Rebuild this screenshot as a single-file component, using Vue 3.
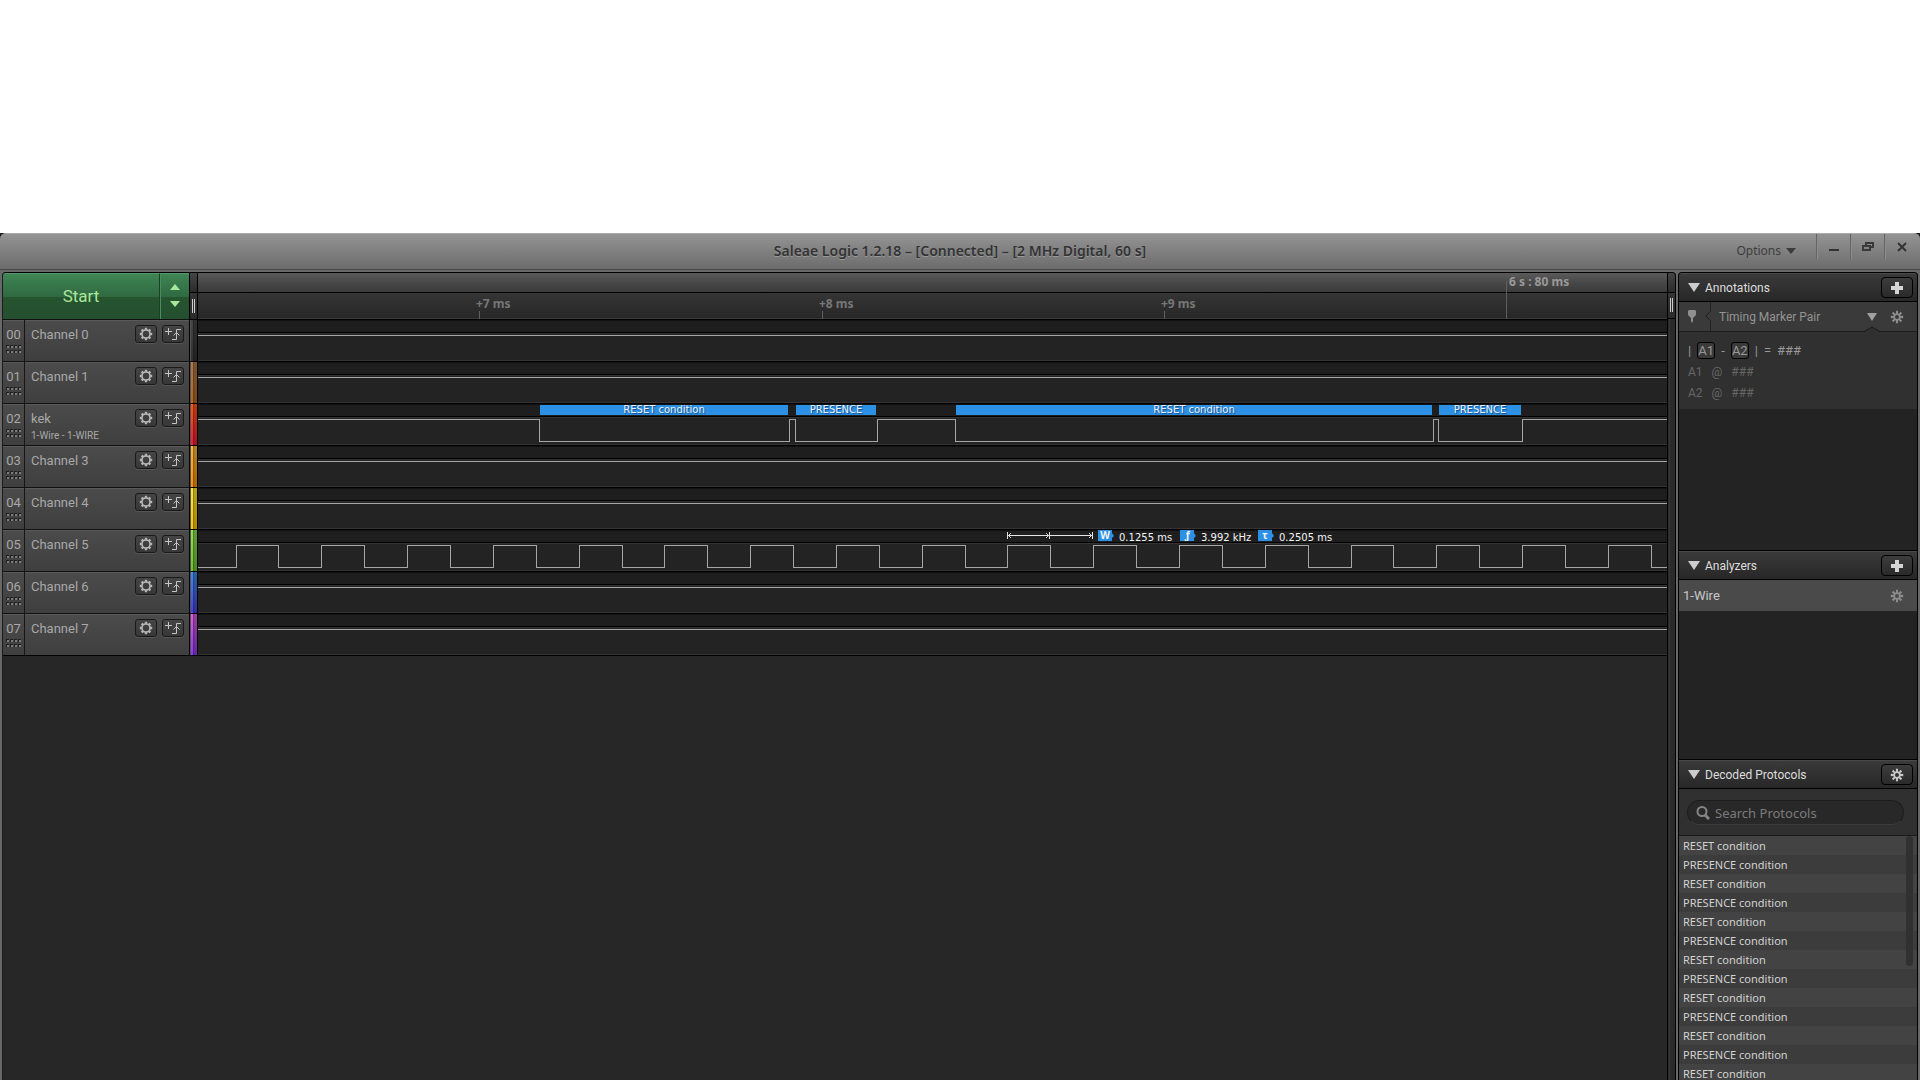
<template>
  <div class="screen">
    <div class="desktop">
      <div class="window">
        <header class="titlebar">
          <h1 class="title">Saleae Logic 1.2.18 – [Connected] – [2 MHz Digital, 60 s]</h1>
          <div class="title-actions">
            <button class="options" type="button">
              Options
              <svg width="10" height="6" viewBox="0 0 10 6"><path d="M0 0h10L5 6z" fill="#3c3c3c" /></svg>
            </button>
            <button class="win-btn" type="button" aria-label="Minimize">
              <svg width="12" height="12" viewBox="0 0 12 12"><path d="M1 8h10v2H1z" fill="#333" /></svg>
            </button>
            <button class="win-btn" type="button" aria-label="Restore">
              <svg width="14" height="12" viewBox="0 0 14 12">
                <path d="M5 5V2h7v4h-2M2 5h7v4H2z" fill="none" stroke="#3a3a3a" stroke-width="2" />
              </svg>
            </button>
            <button class="win-btn" type="button" aria-label="Close">
              <svg width="12" height="12" viewBox="0 0 12 12">
                <path d="M2 2l8 8M10 2l-8 8" stroke="#333" stroke-width="2" />
              </svg>
            </button>
          </div>
        </header>

        <div class="content">
          <main class="capture">
            <div class="row ruler-row">
              <div class="start-group">
                <button class="start" type="button">Start</button>
                <button class="start-arrows" type="button" aria-label="Capture settings">
                  <svg width="10" height="23" viewBox="0 0 10 23">
                    <path d="M5 0l5 6H0zM0 17h10l-5 6z" fill="#a9e69a" />
                  </svg>
                </button>
              </div>
              <div class="grip"><span></span></div>
              <div class="ruler">
                <div class="ruler-top"></div>
                <div class="ruler-bottom"></div>
                <div v-for="tick in ticks" :key="tick.label" class="tick" :class="{ major: tick.major }" :style="{ left: tick.x + 'px' }">
                  <span>{{ tick.label }}</span>
                </div>
              </div>
            </div>

            <div v-for="channel in channels" :key="channel.id" class="row channel">
              <div class="channel-number">
                <span>{{ channel.id }}</span>
                <svg width="15" height="8" viewBox="0 0 15 8">
                  <g v-for="y in [0, 5]" :key="y">
                    <g v-for="x in [0, 4, 8, 12]" :key="x">
                      <rect :x="x" :y="y" width="3" height="3" fill="#1f1f1f" />
                      <rect :x="x + 1" :y="y + 1" width="2" height="2" fill="#7d7d7d" />
                    </g>
                  </g>
                </svg>
              </div>
              <div class="channel-info">
                <div class="channel-name">
                  {{ channel.name }}
                  <small v-if="channel.note">{{ channel.note }}</small>
                </div>
                <button class="small-btn" type="button" :aria-label="'Settings for ' + channel.name">
                  <svg width="14" height="14" viewBox="0 0 14 14"><path :d="gearPath" fill="#b5b5b5" fill-rule="evenodd" /></svg>
                </button>
                <button class="small-btn" type="button" :aria-label="'Trigger for ' + channel.name">
                  <svg width="16" height="14" viewBox="0 0 16 14">
                    <path d="M0 4.500h7M3.500 1v7M7 12.500h4.500V2.500H16M8.500 8.500L11.500 5.500L14.500 8.500" fill="none" stroke="#c4c4c4" />
                  </svg>
                </button>
              </div>
              <div class="channel-color" :class="'color-' + channel.color"></div>
              <div class="lane">
                <div class="lane-top"></div>
                <svg class="wave" width="100%" height="42">
                  <path :d="wavePath(channel)" fill="none" stroke="#a6a6a6" shape-rendering="crispEdges" />
                </svg>
                <div
                  v-for="frame in channel.frames"
                  :key="frame.x"
                  class="frame"
                  :style="{ left: frame.x + 'px', width: frame.width + 'px' }"
                >
                  {{ frame.label }}
                </div>
                <template v-if="channel.measurements">
                  <svg class="span-arrows" width="87" height="8" viewBox="0 0 87 8">
                    <path d="M.5 0v7M42.500 0v7M85.500 0v7M1 3.500h84" stroke="#e4e4e4" fill="none" />
                    <path d="M4 1L1.500 3.500L4 6M39 1l2.500 2.500L39 6M82 1l2.500 2.500L82 6" stroke="#cfcfcf" fill="none" />
                  </svg>
                  <div v-for="m in channel.measurements" :key="m.symbol" class="measure" :style="{ left: m.x + 'px' }">
                    <b>{{ m.symbol }}</b>
                    <span>{{ m.value }}</span>
                  </div>
                </template>
              </div>
            </div>
            <div class="capture-end"></div>
          </main>

          <div class="edge">
            <div class="grip"><span></span></div>
          </div>

          <aside class="sidebar">
            <section class="panel panel-annotations">
              <header class="panel-header">
                <button class="collapse" type="button"><i></i>Annotations</button>
                <button class="panel-btn" type="button" aria-label="Add annotation">
                  <svg width="12" height="12" viewBox="0 0 12 12"><path :d="plusPath" fill="#d4d4d4" /></svg>
                </button>
              </header>
              <div class="marker-bar">
                <svg class="pin" width="8" height="13" viewBox="0 0 8 13">
                  <path d="M1 0h6l1 1v4L5 8v3L4 13L3 11V8L0 5V1z" fill="#8f8f8f" />
                </svg>
                <svg class="notch" width="6" height="29" viewBox="0 0 6 29">
                  <path d="M5.500 0V9L1 14L5.500 19V29" fill="none" stroke="#222" />
                </svg>
                <select v-model="marker" class="marker-select" aria-label="Annotation">
                  <option>Timing Marker Pair</option>
                </select>
                <svg class="select-arrow" width="10" height="8" viewBox="0 0 10 8"><path d="M0 0h10L5 8z" fill="#a0a0a0" /></svg>
                <button class="plain-btn" type="button" aria-label="Annotation settings">
                  <svg width="14" height="14" viewBox="0 0 14 14"><path :d="cogPath" fill="#8d8d8d" fill-rule="evenodd" /></svg>
                </button>
                <svg class="peak" width="16" height="6" viewBox="0 0 16 6">
                  <path d="M0 6L8 1L16 6z" fill="#303030" />
                  <path d="M0 5.500L8 1L16 5.500" fill="none" stroke="#1e1e1e" />
                </svg>
              </div>
              <div class="marker-body">
                <p class="formula">
                  <span>|</span><button type="button">A1</button><span>-</span><button type="button">A2</button><span>|</span><span>=</span><span>###</span>
                </p>
                <p class="marker-line"><span>A1</span><span>@</span><span>###</span></p>
                <p class="marker-line"><span>A2</span><span>@</span><span>###</span></p>
              </div>
            </section>

            <section class="panel panel-analyzers">
              <header class="panel-header">
                <button class="collapse" type="button"><i></i>Analyzers</button>
                <button class="panel-btn" type="button" aria-label="Add analyzer">
                  <svg width="12" height="12" viewBox="0 0 12 12"><path :d="plusPath" fill="#d4d4d4" /></svg>
                </button>
              </header>
              <div class="analyzer">
                <span>1-Wire</span>
                <button class="plain-btn" type="button" aria-label="1-Wire settings">
                  <svg width="14" height="14" viewBox="0 0 14 14"><path :d="cogPath" fill="#8d8d8d" fill-rule="evenodd" /></svg>
                </button>
              </div>
            </section>

            <section class="panel panel-protocols">
              <header class="panel-header">
                <button class="collapse" type="button"><i></i>Decoded Protocols</button>
                <button class="panel-btn" type="button" aria-label="Protocol settings">
                  <svg width="14" height="14" viewBox="0 0 14 14"><path :d="cogPath" fill="#c8c8c8" fill-rule="evenodd" /></svg>
                </button>
              </header>
              <div class="search">
                <label class="search-box" for="protocol-search">
                  <svg width="14" height="14" viewBox="0 0 14 14">
                    <circle cx="6" cy="5.500" r="4.500" fill="none" stroke="#858585" stroke-width="2" />
                    <path d="M9 9l4 4" stroke="#858585" stroke-width="3" />
                  </svg>
                  <input id="protocol-search" v-model="query" type="text" placeholder="Search Protocols" aria-label="Search Protocols" />
                </label>
              </div>
              <ul class="results">
                <li v-for="(item, index) in results" :key="index">{{ item }}</li>
              </ul>
            </section>
          </aside>
        </div>
      </div>
    </div>
  </div>
</template>

<script setup>
import { ref, computed } from "vue";

const query = ref("");
const marker = ref("Timing Marker Pair");

const ticks = [
  { x: 281, label: "+7 ms" },
  { x: 624, label: "+8 ms" },
  { x: 966, label: "+9 ms" },
  { x: 1308, label: "6 s : 80 ms", major: true },
];

// square wave, one edge every half period
const clockEdges = Array.from({ length: 34 }, (_, k) => Math.floor(38.05 + k * 42.885));

const channels = [
  { id: "00", name: "Channel 0", color: "black" },
  { id: "01", name: "Channel 1", color: "brown" },
  {
    id: "02",
    name: "kek",
    note: "1-Wire - 1-WIRE",
    color: "red",
    edges: [341, 591, 597, 679, 757, 1235, 1240, 1324],
    frames: [
      { x: 342, width: 248, label: "RESET condition" },
      { x: 598, width: 80, label: "PRESENCE" },
      { x: 758, width: 476, label: "RESET condition" },
      { x: 1241, width: 82, label: "PRESENCE" },
    ],
  },
  { id: "03", name: "Channel 3", color: "orange" },
  { id: "04", name: "Channel 4", color: "yellow" },
  {
    id: "05",
    name: "Channel 5",
    color: "green",
    startLow: true,
    edges: clockEdges,
    measurements: [
      { x: 900, symbol: "W", value: "0.1255 ms" },
      { x: 982, symbol: "ƒ", value: "3.992 kHz" },
      { x: 1060, symbol: "τ", value: "0.2505 ms" },
    ],
  },
  { id: "06", name: "Channel 6", color: "blue" },
  { id: "07", name: "Channel 7", color: "purple" },
];

const HIGH = 16.5;
const LOW = 38.5;

const wavePath = (channel) => {
  let high = !channel.startLow;
  let d = `M0 ${high ? HIGH : LOW}`;
  for (const x of channel.edges || []) {
    high = !high;
    d += `H${x + 0.5}V${high ? HIGH : LOW}`;
  }
  return d + "H4000";
};

const makeGear = (outer, inner, hole) => {
  const points = [];
  for (let i = 0; i < 8; i++) {
    const a = (i * Math.PI) / 4;
    [[-0.25, inner], [-0.18, outer], [0.18, outer], [0.25, inner]].forEach(([da, r]) => {
      points.push(`${(7 + r * Math.sin(a + da)).toFixed(2)} ${(7 - r * Math.cos(a + da)).toFixed(2)}`);
    });
  }
  return `M${points.join("L")}ZM${7 - hole} 7a${hole} ${hole} 0 1 0 ${hole * 2} 0a${hole} ${hole} 0 1 0 ${-hole * 2} 0z`;
};

const gearPath = makeGear(6.3, 4.8, 3.2);
const cogPath = makeGear(6.3, 3.8, 2);
const plusPath = "M4 0h4v4h4v4H8v4H4V8H0V4h4z";

const protocols = Array.from({ length: 13 }, (_, i) => (i % 2 ? "PRESENCE condition" : "RESET condition"));
const results = computed(() => protocols.filter((p) => p.toLowerCase().includes(query.value.toLowerCase())));
</script>

<style>
body {
  background: #fff;
}
</style>

<style scoped>
* {
  box-sizing: border-box;
}

.screen {
  height: 100vh;
  display: flex;
  flex-direction: column;
  padding-top: 233px;
  overflow: hidden;
  font-family: Roboto, "Liberation Sans", sans-serif;
  font-size: 13px;
  color: #a8a8a8;
}

button,
input,
select {
  font: inherit;
  color: inherit;
  background: none;
  border: 0;
  padding: 0;
  margin: 0;
}

svg {
  display: block;
  flex: none;
}

.desktop {
  flex: 1;
  min-height: 0;
  display: flex;
  background: #1b1d26;
}

.window {
  flex: 1;
  min-width: 0;
  display: flex;
  flex-direction: column;
  background: #666;
  border-radius: 6px 6px 0 0;
  overflow: hidden;
}

.titlebar {
  position: relative;
  height: 37px;
  flex: none;
  display: flex;
  justify-content: center;
  background: linear-gradient(#949494, #6c6c6c);
  border-top: 1px solid #aaa;
  border-bottom: 1px solid #4a4a4a;
  font-family: "Noto Sans", sans-serif;
}

.title {
  margin: 0;
  font-size: 14px;
  line-height: 34px;
  font-weight: 600;
  color: #333;
  text-shadow: 0 1px 0 #9a9a9a;
}

.title-actions {
  position: absolute;
  top: 0;
  right: 2px;
  display: flex;
  height: 33px;
}

.options {
  display: flex;
  align-items: center;
  gap: 5px;
  padding-right: 20px;
  font-size: 12px;
  color: #3c3c3c;
}

.win-btn {
  width: 34px;
  height: 25px;
  display: flex;
  align-items: center;
  justify-content: center;
  border-left: 1px solid #666;
  box-shadow: inset 1px 0 #8d8d8d;
}

.content {
  flex: 1;
  min-height: 0;
  display: flex;
  padding: 2px 2px 0;
  background: #686868;
}

.capture {
  flex: 1;
  min-width: 0;
  background: #272727;
  border-top: 1px solid #000;
  border-left: 1px solid #1c1c1c;
  border-right: 1px solid #000;
  border-radius: 4px 0 0 0;
  overflow: hidden;
}

.row {
  display: flex;
}

.ruler-row {
  height: 46px;
}

.start-group {
  width: 187px;
  display: flex;
  border-right: 1px solid #000;
}

.start,
.start-arrows {
  background: linear-gradient(#408454, #2f6a41 50%, #26542f 51%, #244f31);
  border-top: 1px solid #55996a;
}

.start {
  flex: 1;
  padding-bottom: 2px;
  font-size: 17px;
  color: #a9e69a;
  border-right: 1px solid #1c3f26;
}

.start-arrows {
  width: 29px;
  display: flex;
  align-items: center;
  justify-content: center;
  padding: 0 1px 2px 0;
  border-left: 1px solid #4a8c5d;
}

.grip {
  width: 8px;
  height: 46px;
  flex: none;
  display: flex;
  justify-content: center;
  align-items: flex-end;
  padding-bottom: 6px;
  background: linear-gradient(#444, #2b2b2b 19px, #000 19px, #000 20px, #343434 20px, #2b2b2b);
  border-right: 1px solid #000;
}

.grip span {
  width: 3px;
  height: 14px;
  border-left: 1px solid #ccc;
  border-right: 1px solid #ccc;
}

.ruler {
  position: relative;
  flex: 1;
  display: flex;
  flex-direction: column;
}

.ruler-top {
  height: 20px;
  background: linear-gradient(#5a5a5a, #454545 60%, #3c3c3c);
  border-bottom: 1px solid #000;
}

.ruler-bottom {
  flex: 1;
  background: linear-gradient(#353535, #272727);
  border-bottom: 1px solid #3a3a3a;
}

.tick {
  position: absolute;
  bottom: 0;
  height: 8px;
  border-left: 1px solid #5f5f5f;
}

.tick span {
  position: absolute;
  left: -4px;
  bottom: 7px;
  font: bold 12px/16px "Noto Sans", sans-serif;
  white-space: nowrap;
  color: #777;
}

.tick.major {
  height: 38px;
}

.tick.major span {
  left: 2px;
  bottom: 29px;
  color: #999;
}

.channel {
  height: 42px;
}

.channel-number,
.channel-info {
  background: linear-gradient(#4b4b4b, #3f3f3f);
  border-top: 1px solid #111;
  box-shadow: inset 0 1px #5a5a5a;
}

.channel-number {
  width: 22px;
  display: flex;
  flex-direction: column;
  align-items: center;
  gap: 2px;
  padding-top: 7px;
  line-height: 16px;
  border-right: 1px solid #161616;
}

.channel-info {
  width: 165px;
  display: flex;
  gap: 5px;
  padding: 5px 5px 0 6px;
  border-right: 1px solid #000;
}

.channel-name {
  flex: 1;
  padding-top: 2px;
  line-height: 16px;
  white-space: nowrap;
}

.channel-name small {
  display: block;
  font-size: 10px;
  line-height: 18px;
}

.small-btn {
  width: 22px;
  height: 18px;
  display: flex;
  align-items: center;
  justify-content: center;
  background: linear-gradient(#454545, #373737);
  border: 1px solid #1a1a1a;
  border-radius: 3px;
  box-shadow: 0 1px #555;
}

.channel-color {
  width: 8px;
  border: solid #000;
  border-width: 1px 1px 0 0;
  background: linear-gradient(90deg, #555 0 1px, transparent 1px 3px, rgba(0, 0, 0, 0.45) 3px 4px, rgba(0, 0, 0, 0.3) 4px), var(--strip);
}

.color-black { --strip: linear-gradient(#454545, #303030); }
.color-brown { --strip: linear-gradient(#b0784c, #b3681e); }
.color-red { --strip: linear-gradient(#ff5a16, #f01a3a); }
.color-orange { --strip: linear-gradient(#f8b83c, #ff9000); }
.color-yellow { --strip: linear-gradient(#fbe83a, #ffc400); }
.color-green { --strip: linear-gradient(#90e050, #6cc030); }
.color-blue { --strip: linear-gradient(#3c90ea, #4b3fe0); }
.color-purple { --strip: linear-gradient(#dc5cdc, #8e38f0); }

.lane {
  position: relative;
  flex: 1;
  min-width: 0;
  background: #232323;
  border-top: 1px solid #000;
  border-bottom: 1px solid #333;
  overflow: hidden;
}

.lane-top {
  height: 13px;
  background: #1e1e1e;
  border-top: 1px solid #111;
  border-bottom: 1px solid #000;
  box-shadow: 0 1px #333;
}

.wave {
  position: absolute;
  top: -1px;
  left: 0;
}

.frame {
  position: absolute;
  top: 1px;
  height: 10px;
  font: 10px/10px "DejaVu Sans", sans-serif;
  text-align: center;
  color: #f2f2f2;
  background: #2c90e4;
  text-shadow: 1px 1px 1px #0a4a90;
}

.span-arrows {
  position: absolute;
  top: 2px;
  left: 809px;
}

.measure {
  position: absolute;
  top: 0;
  display: flex;
  gap: 5px;
  font: 10px/16px "DejaVu Sans", sans-serif;
  white-space: nowrap;
  color: #f4f4f4;
}

.measure b {
  width: 16px;
  height: 11px;
  padding-right: 2px;
  font: bold 10px/11px "Noto Sans", sans-serif;
  text-align: center;
  background: #2c90e4;
  clip-path: polygon(0 0, 14px 0, 14px 3px, 16px 6px, 14px 8px, 14px 11px, 0 11px);
}

.capture-end {
  border-top: 1px solid #000;
}

.edge {
  width: 8px;
  flex: none;
  margin-right: 2px;
  background: linear-gradient(90deg, #2a2a2a 1px, #353535 1px 2px, #2a2a2a 2px);
  border-top: 1px solid #000;
  border-right: 1px solid #000;
  border-radius: 0 4px 0 0;
  overflow: hidden;
}

.edge .grip {
  width: 7px;
  padding-right: 1px;
  border-right: 0;
  border-bottom: 1px solid #000;
}

.sidebar {
  width: 240px;
  flex: none;
  display: flex;
  flex-direction: column;
  background: #232323;
  border: solid #000;
  border-width: 1px 1px 0;
  border-radius: 4px 4px 0 0;
  overflow: hidden;
}

.panel-annotations {
  height: 277px;
  flex: none;
}

.panel-analyzers {
  height: 209px;
  flex: none;
  border-top: 1px solid #000;
}

.panel-protocols {
  flex: 1;
  min-height: 0;
  display: flex;
  flex-direction: column;
  border-top: 1px solid #000;
}

.panel-header {
  height: 29px;
  flex: none;
  display: flex;
  align-items: center;
  justify-content: space-between;
  padding: 0 4px 0 9px;
  background: linear-gradient(#3a3a3a, #272727);
  border-top: 1px solid #4a4a4a;
  border-bottom: 1px solid #000;
}

.collapse {
  display: flex;
  align-items: center;
  gap: 5px;
  font-size: 12px;
  line-height: 18px;
  color: #ddd;
}

.collapse i {
  border: 6px solid transparent;
  border-top: 9px solid #ccc;
  border-bottom: 0;
}

.panel-btn {
  width: 32px;
  height: 21px;
  display: flex;
  align-items: center;
  justify-content: center;
  background: linear-gradient(#3c3c3c, #2a2a2a);
  border: 1px solid #000;
  border-radius: 4px;
}

.marker-bar {
  position: relative;
  height: 30px;
  display: flex;
  align-items: center;
  padding: 0 12px 0 9px;
  background: #3a3a3a;
  border-bottom: 1px solid #1e1e1e;
}

.notch {
  margin-left: 9px;
}

.marker-select {
  flex: 1;
  margin-left: 8px;
  appearance: none;
  font-size: 12px;
  color: #949494;
}

.select-arrow {
  margin-right: 12px;
}

.plain-btn {
  width: 16px;
  display: flex;
  justify-content: center;
}

.peak {
  position: absolute;
  right: 37px;
  bottom: -1px;
}

.marker-body {
  padding: 8px 9px 6px;
  background: #303030;
}

.marker-body p {
  display: flex;
  align-items: center;
  height: 21px;
  margin: 0;
}

.formula {
  gap: 6px;
  color: #999;
}

.formula button {
  width: 18px;
  height: 17px;
  line-height: 15px;
  border: 1px solid #000;
  border-radius: 3px;
  background: #3a3a3a;
}

.marker-line {
  gap: 9px;
  font-size: 12px;
  color: #666;
}

.analyzer {
  height: 31px;
  display: flex;
  align-items: center;
  justify-content: space-between;
  padding: 0 12px 0 4px;
  color: #c8c8c8;
  background: #4a4a4a;
}

.search {
  height: 47px;
  flex: none;
  padding: 11px 13px 0 8px;
  background: #303030;
  border-bottom: 1px solid #1a1a1a;
}

.search-box {
  height: 25px;
  display: flex;
  align-items: center;
  gap: 5px;
  padding: 0 8px;
  background: #282828;
  border: 1px solid #1c1c1c;
  border-bottom-color: #3c3c3c;
  border-radius: 13px;
}

.search-box input {
  flex: 1;
  min-width: 0;
  outline: none;
  font-family: "Noto Sans", sans-serif;
}

.search-box input::placeholder {
  color: #7b7b7b;
  opacity: 1;
}

.results {
  position: relative;
  flex: 1;
  min-height: 0;
  margin: 0;
  padding: 0;
  overflow: hidden;
  list-style: none;
  font: 11px/19px "Noto Sans", sans-serif;
  color: #d2d2d2;
}

.results::after {
  content: "";
  position: absolute;
  top: 0;
  right: 4px;
  width: 7px;
  height: 130px;
  border-radius: 4px;
  background: #313131;
}

.results li {
  padding-left: 4px;
  background: #434343;
}

.results li:nth-child(even) {
  background: #3c3c3c;
}
</style>
